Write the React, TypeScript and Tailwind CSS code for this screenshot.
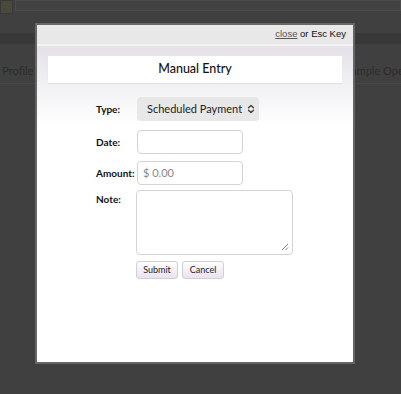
import React from 'react';

const font = { fontFamily: 'Lato, "Open Sans", sans-serif' };

function SelectArrows() {
  return (
    <svg width="8" height="10" viewBox="0 0 8 10" fill="none" stroke="#333" strokeWidth="1.2" strokeLinecap="round" strokeLinejoin="round">
      <path d="M1.5 3.8 L4 1.5 L6.5 3.8" />
      <path d="M1.5 6.2 L4 8.5 L6.5 6.2" />
    </svg>
  );
}

export default function App() {
  return (
    <div className="relative w-[401px] h-[394px] overflow-hidden bg-[#404040]" style={font}>
      {/* page behind the overlay */}
      <div className="flex h-[15px] gap-[2px]">
        <div className="w-[13px] h-[14px] bg-[#4a4a3a] border border-[#3a3a3a]" />
        <div className="flex-1 h-[11px] border border-[#4c4c4c] bg-[#424242]" />
      </div>
      <div className="h-[18px]" />
      <div className="h-[11px] bg-[#383838]" />
      <div className="h-[16px]" />
      <div className="flex justify-between h-[24px] items-center border-b border-[#474747] text-[11px] text-[#2c2c2c] whitespace-nowrap">
        <span className="-ml-[16px]">My Profile</span>
        <span className="-mr-[36px]">Example Operations</span>
      </div>

      {/* modal */}
      <div className="absolute left-[35px] top-[23px] w-[320px] h-[341px] border-2 border-[#666] bg-white flex flex-col">
        <div className="h-[19px] bg-[#e8e8e8] flex items-center justify-end pr-[7px] text-[9.5px] text-[#111]" style={{ fontFamily: '"Liberation Sans", Arial, sans-serif' }}>
          <span className="underline text-[#555]">close</span>
          <span>&nbsp;or Esc Key</span>
        </div>
        <div className="h-[2px] bg-[#f2f2f2]" />
        <div className="flex-1 bg-gradient-to-b from-[#e4e2e8] to-white to-[25%] px-[11px] pt-[10px]">
          <div className="h-[27px] bg-white flex items-center justify-center text-[12.5px] font-medium text-[#111] shadow-[0_1px_1px_rgba(0,0,0,0.06)]">
            Manual Entry
          </div>
          <div className="pl-[48px] pt-[14px] flex flex-col text-[10px]">
            <div className="flex items-center h-[24px]">
              <span className="w-[41px] font-bold text-[#111]">Type:</span>
              <div className="w-[122px] h-[24px] rounded-[4px] bg-[#e8e8e8] flex items-center pl-[10px] gap-[5px] text-[11px] text-[#222] whitespace-nowrap">
                Scheduled Payment <SelectArrows />
              </div>
            </div>
            <div className="flex items-center h-[24px] mt-[9px]">
              <span className="w-[41px] font-bold text-[#111]">Date:</span>
              <div className="w-[106px] h-[24px] rounded-[4px] bg-white border border-[#d4d4d4]" />
            </div>
            <div className="flex items-center h-[24px] mt-[7px]">
              <span className="w-[41px] font-bold text-[#111] whitespace-nowrap">Amount:</span>
              <div className="w-[106px] h-[24px] rounded-[4px] bg-white border border-[#d4d4d4] flex items-center pl-[5px] text-[11px] text-[#888]">
                $ 0.00
              </div>
            </div>
            <div className="flex items-start mt-[5px]">
              <span className="w-[40px] font-bold text-[#111] pt-[2px]">Note:</span>
              <div className="relative w-[157px] h-[65px] rounded-[4px] bg-white border border-[#d4d4d4]">
                <svg className="absolute right-[3px] bottom-[3px]" width="8" height="8" viewBox="0 0 8 8" stroke="#777" strokeWidth="0.9">
                  <path d="M1 7 L7 1" />
                  <path d="M4.5 7 L7 4.5" />
                </svg>
              </div>
            </div>
            <div className="flex gap-[4px] mt-[6px] ml-[40px]">
              <div className="w-[42px] h-[18px] rounded-[3px] border border-[#d0d0d0] bg-gradient-to-b from-white to-[#ebe1f2] flex items-center justify-center text-[9px] text-[#222]">
                Submit
              </div>
              <div className="w-[42px] h-[18px] rounded-[3px] border border-[#d0d0d0] bg-gradient-to-b from-white to-[#ebe1f2] flex items-center justify-center text-[9px] text-[#222]">
                Cancel
              </div>
            </div>
          </div>
        </div>
      </div>
    </div>
  );
}
